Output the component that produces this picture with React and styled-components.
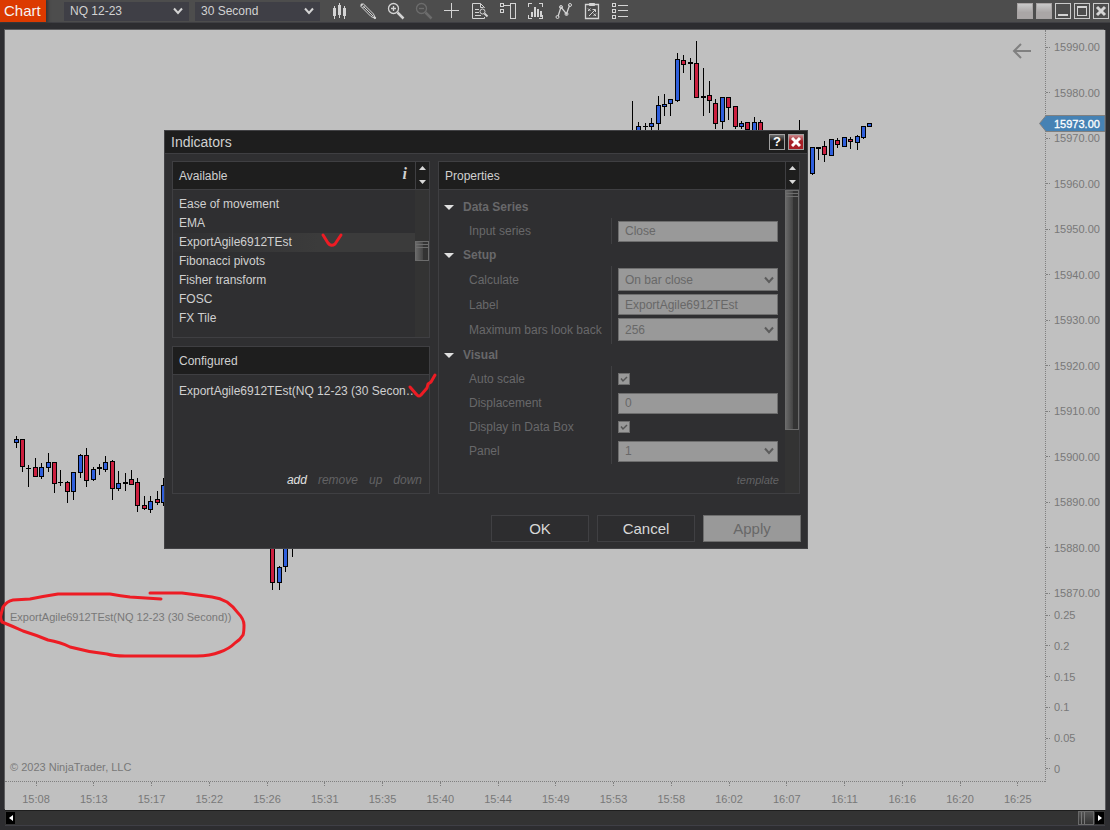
import React from "react";
import styled, { createGlobalStyle, css } from "styled-components";

const Global = createGlobalStyle`
  * { box-sizing: border-box; }
  body {
    margin: 0;
    background: #2d2d30;
    font-family: "Liberation Sans", Arial, sans-serif;
    font-size: 12px;
    color: #d0d0d0;
  }
  button, input, select { font: inherit; color: inherit; margin: 0; }
`;

/* ---------- window ---------- */

const Window = styled.div`
  position: relative;
  display: flex;
  flex-direction: column;
  min-height: 100vh;
`;

const Toolbar = styled.header`
  display: flex;
  align-items: center;
  height: 23px;
  padding-right: 1px;
  background: #4d4d4d;
  border-bottom: 1px solid #3f3f43;
`;

const WindowTab = styled.h1`
  margin: 0 18px 0 0;
  width: 46px;
  height: 22px;
  padding-left: 4px;
  line-height: 21px;
  font-size: 15px;
  font-weight: normal;
  color: #f4f4f4;
  background: #dc3a00;
  box-shadow: 1px 0 3px 1px #333;
`;

const SelectBox = styled.div`
  display: flex;
  align-items: center;
  position: relative;
  flex: none;
  width: ${(p) => (p.$field ? "160px" : "125px")};
  height: ${(p) => p.$height}px;
  margin-right: ${(p) => (p.$field ? 0 : 6)}px;
  svg {
    position: absolute;
    right: ${(p) => (p.$field ? 4 : 6)}px;
    pointer-events: none;
  }
`;

const fieldLook = css`
  background: #999999;
  border: 1px solid #6e6e6e;
  color: #686868;
  opacity: 1;
`;

const SelectControl = styled.select`
  appearance: none;
  width: 100%;
  height: 100%;
  padding: 0 22px 0 6px;
  border: 0;
  border-radius: 0;
  outline: 0;
  background: #3f3f46;
  color: #d2d2d2;
  ${(p) => p.$field && fieldLook}
`;

const ToolGroup = styled.nav`
  display: flex;
  flex: 1;
`;

const ToolButton = styled.button`
  display: flex;
  align-items: center;
  justify-content: center;
  width: 28px;
  height: 20px;
  padding: 0;
  border: 0;
  background: none;
  color: ${(p) => (p.disabled ? "#6c6c6c" : "#d4d4d4")};
`;

const WindowButtons = styled.div`
  display: flex;
  gap: 3px;
`;

const WindowButton = styled.button`
  display: flex;
  align-items: center;
  justify-content: center;
  width: 16px;
  height: 16px;
  padding: 0;
  border: 1px solid ${(p) => (p.$filled ? "#a8a4a4" : "#cacaca")};
  background: ${(p) => (p.$filled ? "linear-gradient(#c9c9c9, #aaa6a6 60%)" : "none")};
  color: #d4d4d4;
`;

/* ---------- chart ---------- */

const Body = styled.main`
  flex: 1;
  display: flex;
  flex-direction: column;
  padding: 7px 5px 4px;
`;

const ChartArea = styled.section`
  flex: 1;
  display: grid;
  grid-template-columns: 1fr 60px;
  grid-template-rows: 1fr 28px;
  background: #c0c0c0;
  color: #787878;
  font-size: 11px;
  line-height: 14px;
  box-shadow: -1px -1px 0 #5c5c5e, 1px 0 0 #5c5c5e;
`;

const Plot = styled.div`
  position: relative;
  display: flex;
  flex-direction: column;
  min-height: 752px;
  border-bottom: 1px dotted #808080;
`;

const Candles = styled.svg`
  position: absolute;
  inset: 0;
  width: 100%;
  height: 100%;
`;

const PricePanel = styled.div`
  flex: 580;
  display: flex;
  justify-content: flex-end;
  align-items: flex-start;
  padding: 12px 13px;
`;

const IndicatorPanel = styled.div`
  flex: 171;
  display: flex;
  flex-direction: column;
  justify-content: space-between;
  padding: 0 5px 7px;
`;

const BackButton = styled.button`
  display: flex;
  padding: 0;
  border: 0;
  background: none;
  position: relative;
`;

const PlotText = styled.p`
  margin: 0;
`;

const PriceAxis = styled.div`
  position: relative;
  display: flex;
  flex-direction: column;
  gap: 8px;
  padding: 10px 0 6px;
  border-left: 1px dotted #808080;
`;

const AxisGroup = styled.ul`
  flex: ${(p) => p.$share} 0 0;
  display: flex;
  flex-direction: column;
  justify-content: space-between;
  margin: 0;
  padding: 0;
  list-style: none;
`;

const AxisRow = styled.li`
  display: flex;
  align-items: center;
  gap: 4px;
  &::before {
    content: "";
    width: 4px;
    border-top: 1px dotted #808080;
  }
`;

const PriceMarker = styled.div`
  position: absolute;
  top: 85px;
  left: -7px;
  right: 0;
  height: 17px;
  padding-left: 15px;
  line-height: 18px;
  color: #fff;
  -webkit-text-stroke: 0.3px #fff;
  svg { position: absolute; inset: 0; width: 100%; height: 100%; }
  span { position: relative; }
`;

const TimeAxis = styled.ul`
  display: flex;
  justify-content: space-between;
  margin: 0;
  padding: 0 12px 0 16px;
  list-style: none;
`;

const TimeMark = styled.li`
  display: flex;
  flex-direction: column;
  align-items: center;
  gap: 6px;
  width: 30px;
  &::before {
    content: "";
    height: 4px;
    border-left: 1px dotted #808080;
  }
`;

const ChartScroll = styled.div`
  display: flex;
  align-items: center;
  gap: 1px;
  height: 16px;
  padding: 0 1px;
  background: #333;
  border-top: 1px solid #1e1e1e;
  border-bottom: 1px solid #3f3f46;
`;

const ScrollArrow = styled.button`
  display: flex;
  align-items: center;
  justify-content: center;
  width: 9px;
  height: 12px;
  padding: 0;
  border: 0;
  background: #000;
`;

const ChartThumb = styled.div`
  width: 16px;
  height: 14px;
  margin-left: auto;
  border: 1px solid #6a6a6a;
  background: linear-gradient(90deg, transparent 2px, #777 2px 3px, transparent 3px 5px, #777 5px 6px, transparent 6px),
    linear-gradient(#555, #333);
`;

/* ---------- dialog ---------- */

const Dialog = styled.section`
  position: absolute;
  top: 130px;
  left: 164px;
  width: 644px;
  background: #2f2f31;
  border: 1px solid #424245;
`;

const TitleBar = styled.div`
  display: flex;
  align-items: center;
  gap: 3px;
  height: 23px;
  padding: 0 3px 0 6px;
  background: #1e1e1e;
  border-bottom: 1px solid #3f3f42;
`;

const DialogTitle = styled.h2`
  flex: 1;
  margin: 0;
  font-size: 14px;
  font-weight: normal;
`;

const TitleButton = styled.button`
  display: flex;
  align-items: center;
  justify-content: center;
  width: 16px;
  height: 16px;
  padding: 0;
  border: 1px solid #a0a0a0;
  font-size: 13px;
  line-height: 14px;
  font-weight: bold;
  color: #fff;
  background: ${(p) =>
    p.$danger ? "linear-gradient(#c98a8e, #a81f26 45%)" : "linear-gradient(#6c6c6c, #1e1e1e 45%)"};
`;

const DialogBody = styled.div`
  display: flex;
  gap: 8px;
  padding: 7px 7px 0;
`;

const Column = styled.div`
  display: flex;
  flex-direction: column;
  gap: 8px;
  width: 258px;
`;

const Panel = styled.div`
  display: flex;
  flex-direction: column;
  min-width: 0;
  height: ${(p) => p.$height}px;
  flex: ${(p) => (p.$grow ? 1 : "none")};
  border: 1px solid #3f3f42;
`;

const PanelHeader = styled.div`
  display: flex;
  align-items: center;
  flex: none;
  height: 28px;
  padding-left: 6px;
  background: #1e1e1e;
  border-bottom: 1px solid #3f3f42;
`;

const PanelTitle = styled.h3`
  flex: 1;
  margin: 0;
  font-size: 12px;
  font-weight: normal;
`;

const InfoButton = styled.button`
  padding: 0 8px 4px;
  border: 0;
  background: none;
  font: italic bold 16px "Liberation Serif", "Times New Roman", serif;
`;

const Spinner = styled.div`
  display: flex;
  flex-direction: column;
  justify-content: space-between;
  width: 14px;
  height: 27px;
  padding: 4px 0 5px;
  border-left: 1px solid #3f3f42;
  button {
    display: flex;
    justify-content: center;
    padding: 0;
    border: 0;
    background: none;
  }
`;

const PanelBody = styled.div`
  flex: 1;
  display: flex;
  min-height: 0;
`;

const ItemList = styled.ul`
  flex: 1;
  min-width: 0;
  margin: 0;
  padding: ${(p) => (p.$roomy ? 7 : 5)}px 0;
  list-style: none;
`;

const Item = styled.li`
  height: 19px;
  line-height: 19px;
  padding: 0 10px 0 6px;
  overflow: hidden;
  white-space: nowrap;
  text-overflow: ellipsis;
  background: ${(p) => (p.$selected ? "linear-gradient(90deg, #303032, #3b3b3b 60%)" : "none")};
`;

const ScrollTrack = styled.div`
  flex: none;
  width: 14px;
  padding-top: ${(p) => p.$offset}px;
  background: #333;
`;

const ScrollThumb = styled.div`
  height: ${(p) => p.$length}px;
  border: 1px solid #6c6c6c;
  background: linear-gradient(transparent 2px, #6f6f6f 2px 3px, transparent 3px 5px, #6f6f6f 5px 6px, transparent 6px),
    linear-gradient(90deg, #686868, #444 7px, #333 7px);
`;

const Actions = styled.div`
  display: flex;
  justify-content: flex-end;
  gap: 11px;
  padding: 0 7px 6px;
`;

const LinkButton = styled.button`
  padding: 0;
  border: 0;
  background: none;
  font-style: italic;
  font-size: ${(p) => (p.$small ? 11 : 12)}px;
  line-height: 14px;
  color: ${(p) => (p.disabled ? "#626264" : "#e0e0e0")};
`;

const Properties = styled.div`
  flex: 1;
  display: flex;
  flex-direction: column;
  padding-top: 6px;
`;

const GroupTitle = styled.h4`
  display: flex;
  align-items: center;
  gap: 9px;
  height: 22px;
  margin: 0;
  padding-left: 5px;
  font-size: 12px;
  color: #68686a;
`;

const GroupBody = styled.div`
  padding: 1px 0 ${(p) => (p.$tall ? 2 : 1)}px;
  background: linear-gradient(#404042, #404042) 172px 0 / 1px 100% no-repeat;
`;

const PropertyRow = styled.div`
  display: grid;
  grid-template-columns: 149px 160px;
  align-items: center;
  height: ${(p) => (p.$tall ? 25 : 24)}px;
  padding-left: 30px;
`;

const PropertyLabel = styled.label`
  color: #68686a;
`;

const TextField = styled.input`
  ${fieldLook}
  width: 160px;
  height: 21px;
  padding: 0 6px;
`;

const CheckField = styled.span`
  display: flex;
  position: relative;
  width: 12px;
  height: 12px;
  input {
    appearance: none;
    width: 12px;
    height: 12px;
    ${fieldLook}
  }
  svg { position: absolute; inset: 0; pointer-events: none; }
`;

const TemplateRow = styled.div`
  display: flex;
  justify-content: flex-end;
  margin-top: auto;
  padding: 0 6px 6px 0;
`;

const Footer = styled.div`
  display: flex;
  justify-content: flex-end;
  gap: 8px;
  padding: 21px 6px 6px;
`;

const DialogButton = styled.button`
  width: 98px;
  height: 27px;
  padding: 0;
  font-size: 15px;
  color: #d8d8d8;
  background: #2d2d2f;
  border: 1px solid #404043;
  ${(p) => p.disabled && fieldLook}
`;

const Markup = styled.svg`
  position: absolute;
  top: 0;
  left: 0;
  pointer-events: none;
`;

/* ---------- data ---------- */

const UP = "#2f5fdc";
const DOWN = "#cc1f3f";
const FLAT = "#000";

// left edge, body top, body bottom, wick top, wick bottom, colour
const CANDLES = [
  [14, 439, 443, 436, 448, UP], [20, 439, 467, 439, 472, DOWN], [26, 468, 469, 465, 487, FLAT],
  [33, 467, 477, 458, 477, DOWN], [39, 467, 477, 463, 479, UP], [46, 462, 468, 453, 472, UP],
  [52, 462, 484, 462, 493, DOWN], [58, 482, 483, 470, 486, FLAT], [65, 482, 492, 481, 503, DOWN],
  [71, 472, 492, 472, 500, UP], [78, 455, 473, 454, 478, UP], [84, 455, 481, 448, 487, DOWN],
  [91, 469, 480, 467, 481, UP], [97, 467, 469, 464, 475, FLAT], [103, 462, 470, 456, 472, UP],
  [110, 461, 489, 460, 500, DOWN], [116, 483, 489, 471, 491, UP], [123, 482, 484, 473, 491, FLAT],
  [129, 479, 485, 470, 485, DOWN], [135, 482, 506, 478, 512, DOWN], [142, 505, 509, 496, 510, DOWN],
  [148, 501, 510, 496, 513, UP], [155, 499, 503, 491, 505, DOWN], [161, 485, 503, 478, 506, UP],
  [270, 520, 583, 510, 590, DOWN], [277, 567, 583, 566, 590, UP], [283, 530, 567, 520, 572, UP],
  [290, 530, 540, 520, 557, UP], [630, 132, 150, 101, 160, UP], [636, 126, 140, 122, 145, UP],
  [643, 126, 127, 123, 134, FLAT], [649, 123, 127, 118, 134, UP], [656, 105, 124, 96, 134, UP],
  [662, 104, 107, 94, 116, UP], [668, 99, 104, 99, 116, UP], [675, 59, 101, 53, 102, UP],
  [681, 60, 65, 55, 73, DOWN], [688, 62, 64, 58, 80, FLAT], [694, 63, 98, 41, 98, DOWN],
  [701, 96, 98, 68, 116, FLAT], [707, 95, 101, 81, 113, DOWN], [713, 103, 124, 99, 129, DOWN],
  [720, 97, 122, 97, 129, UP], [726, 97, 108, 97, 120, DOWN], [733, 106, 127, 106, 129, DOWN],
  [739, 123, 127, 121, 129, UP], [745, 122, 130, 122, 130, DOWN], [752, 122, 134, 117, 134, UP],
  [758, 122, 136, 120, 136, DOWN], [797, 135, 150, 120, 160, UP], [810, 147, 174, 147, 175, UP],
  [816, 147, 149, 147, 160, FLAT], [822, 146, 155, 141, 162, DOWN], [829, 139, 156, 139, 156, UP],
  [835, 140, 145, 138, 148, DOWN], [842, 137, 147, 137, 147, UP], [848, 139, 142, 137, 149, DOWN],
  [855, 136, 143, 135, 150, UP], [861, 126, 138, 126, 139, UP], [867, 123, 127, 123, 127, UP],
];

const PRICES = Array.from({ length: 13 }, (_, i) => (15990 - i * 10).toFixed(2));
const LEVELS = ["0.25", "0.2", "0.15", "0.1", "0.05", "0"];
const TIMES = [
  "15:08", "15:13", "15:17", "15:22", "15:26", "15:31", "15:35", "15:40", "15:44",
  "15:49", "15:53", "15:58", "16:02", "16:07", "16:11", "16:16", "16:20", "16:25",
];
const AVAILABLE = [
  "Ease of movement", "EMA", "ExportAgile6912TEst", "Fibonacci pivots",
  "Fisher transform", "FOSC", "FX Tile",
];

const GROUPS = [
  { title: "Data Series", rows: [{ label: "Input series", type: "text", value: "Close" }] },
  {
    title: "Setup",
    tall: true,
    rows: [
      { label: "Calculate", type: "select", value: "On bar close" },
      { label: "Label", type: "text", value: "ExportAgile6912TEst" },
      { label: "Maximum bars look back", type: "select", value: "256" },
    ],
  },
  {
    title: "Visual",
    rows: [
      { label: "Auto scale", type: "check" },
      { label: "Displacement", type: "text", value: "0" },
      { label: "Display in Data Box", type: "check" },
      { label: "Panel", type: "select", value: "1" },
    ],
  },
];

/* ---------- icons ---------- */

const Icon = ({ children, crisp }) => (
  <svg width="18" height="18" viewBox="0 0 18 18" fill="none" stroke="currentColor"
    shapeRendering={crisp ? "crispEdges" : "auto"}>
    {children}
  </svg>
);

const TOOLS = [
  ["Chart style", <Icon crisp><path fill="currentColor" stroke="none" d="M2 6h3v8h-3zM3 4h1v13h-1zM7 3h3v10h-3zM8 1h1v15h-1zM12 6h3v8h-3zM13 4h1v13h-1z" /></Icon>],
  ["Drawing tools", <Icon><path d="M1.500 4 4 1.500 14.500 12 16.500 16.500 12 14.500zM3.500 6 6 3.500M4.500 4.500 14 14" /><path d="M2 3.500 3.500 2" strokeWidth="2" /><path d="M14.500 14.500 16.500 16.500" strokeWidth="2" /></Icon>],
  ["Zoom in", <Icon><circle cx="6.500" cy="6.500" r="5" strokeWidth="1.300" /><path d="M4 6.500h5M6.500 4v5" strokeWidth="1.300" /><path d="m10.500 10.500 6 6" strokeWidth="2.500" /></Icon>],
  ["Zoom out", <Icon><circle cx="6.500" cy="6.500" r="5" strokeWidth="1.300" /><path d="M4 6.500h5" strokeWidth="1.300" /><path d="m10.500 10.500 6 6" strokeWidth="2.500" /></Icon>, true],
  ["Crosshair", <Icon crisp><path d="M1 8.500h15M8.500 1v15" /></Icon>],
  ["Data box", <Icon><path d="M13.500 6V5.500L9.500 1.500h-8v15h12V15M9.500 1.500v4h3M4 7.500h4M4 10.500h4M4 13.500h6" /><circle cx="11.500" cy="9.500" r="2.500" /><path d="m13.500 11.500 3 3" strokeWidth="2" /></Icon>],
  ["Chart trader", <Icon crisp><path d="M1.500 1.500h3v3h-3zM1.500 7.500h3v3h-3zM5 3.500h6M11.500 1.500h5v15h-5z" /></Icon>],
  ["Data series", <Icon crisp><path d="M1.500 5V1.500H5M12 1.500h3.500V5M15.500 13v3.500H12M5 16.500H1.500V13" /><path strokeWidth="2" d="M5 10v5M8 5v10M11 7v8M14 9v6" /></Icon>],
  ["Indicators", <Icon><path d="M3 14.500 6 5l5.500 7L14.500 3.500" strokeWidth="1.300" /><circle cx="2.500" cy="15" r="1.500" /><circle cx="6" cy="5" r="1.500" /><circle cx="11.500" cy="12" r="1.500" /><circle cx="15" cy="3" r="1.500" /></Icon>],
  ["Strategies", <Icon><path d="M2.500 2.500h13v14h-13z" strokeWidth="1.300" /><path d="M6.500 1.500h5v2h-5z" fill="currentColor" /><path d="m5 6.500 2.500 2.500M7.500 6.500 5 9M10.500 11.500l2.500 2.500M13 11.500 10.500 14M6 14l6-6M9.500 7.500H12.500V10" /></Icon>],
  ["Properties", <Icon crisp><path d="M1.500 1.500h3v3h-3zM1.500 7.500h3v3h-3zM1.500 13.500h3v3h-3zM7 3.500h10M7 8.500h10M7 14.500h10" /></Icon>],
];

const Chevron = ({ color }) => (
  <svg width="10" height="8" viewBox="0 0 10 8" fill="none" stroke={color} strokeWidth="2">
    <path d="M1 1.500 5 6 9 1.500" />
  </svg>
);

const Triangle = ({ up }) => (
  <svg width="7" height="4" viewBox="0 0 7 4" fill="#d8d8d8">
    <path d={up ? "M0 4 3.500 0 7 4z" : "M0 0h7L3.500 4z"} />
  </svg>
);

/* ---------- parts ---------- */

function Select({ label, value, field, height, id }) {
  return (
    <SelectBox $field={field} $height={height}>
      <SelectControl id={id} aria-label={label} $field={field} disabled={field} defaultValue={value}>
        <option>{value}</option>
      </SelectControl>
      <Chevron color={field ? "#5c5c5c" : "#d4d4d4"} />
    </SelectBox>
  );
}

function Property({ row, tall }) {
  const id = row.label.toLowerCase().replace(/ /g, "-");
  return (
    <PropertyRow $tall={tall}>
      <PropertyLabel htmlFor={id}>{row.label}</PropertyLabel>
      {row.type === "text" && <TextField id={id} defaultValue={row.value} disabled />}
      {row.type === "select" && <Select id={id} value={row.value} field height={tall ? 23 : 21} />}
      {row.type === "check" && (
        <CheckField>
          <input id={id} type="checkbox" defaultChecked disabled />
          <svg width="12" height="12" viewBox="0 0 12 12" fill="none" stroke="#555" strokeWidth="1.500">
            <path d="m3 5.500 2 2.500 4-4" />
          </svg>
        </CheckField>
      )}
    </PropertyRow>
  );
}

const HeaderSpinner = () => (
  <Spinner>
    <button aria-label="Scroll up"><Triangle up /></button>
    <button aria-label="Scroll down"><Triangle /></button>
  </Spinner>
);

function IndicatorsDialog() {
  return (
    <Dialog role="dialog" aria-label="Indicators">
      <TitleBar>
        <DialogTitle>Indicators</DialogTitle>
        <TitleButton>?</TitleButton>
        <TitleButton $danger aria-label="Close">
          <svg width="10" height="10" viewBox="0 0 10 10" stroke="#fff" strokeWidth="3">
            <path d="m1 1 8 8M9 1 1 9" />
          </svg>
        </TitleButton>
      </TitleBar>
      <DialogBody>
        <Column>
          <Panel $height={177}>
            <PanelHeader>
              <PanelTitle>Available</PanelTitle>
              <InfoButton aria-label="Information">i</InfoButton>
              <HeaderSpinner />
            </PanelHeader>
            <PanelBody>
              <ItemList>
                {AVAILABLE.map((name) => (
                  <Item key={name} $selected={name === "ExportAgile6912TEst"}>{name}</Item>
                ))}
              </ItemList>
              <ScrollTrack $offset={51}><ScrollThumb $length={20} /></ScrollTrack>
            </PanelBody>
          </Panel>
          <Panel $height={148}>
            <PanelHeader><PanelTitle>Configured</PanelTitle></PanelHeader>
            <PanelBody>
              <ItemList $roomy>
                <Item>ExportAgile6912TEst(NQ 12-23 (30 Second))</Item>
              </ItemList>
            </PanelBody>
            <Actions>
              <LinkButton>add</LinkButton>
              <LinkButton disabled>remove</LinkButton>
              <LinkButton disabled>up</LinkButton>
              <LinkButton disabled>down</LinkButton>
            </Actions>
          </Panel>
        </Column>
        <Panel $grow $height={333}>
          <PanelHeader>
            <PanelTitle>Properties</PanelTitle>
            <HeaderSpinner />
          </PanelHeader>
          <PanelBody>
            <Properties>
              {GROUPS.map((group) => (
                <React.Fragment key={group.title}>
                  <GroupTitle>
                    <svg width="10" height="5" viewBox="0 0 10 5" fill="#e0e0e0"><path d="M0 0h10L5 5z" /></svg>
                    {group.title}
                  </GroupTitle>
                  <GroupBody $tall={group.tall}>
                    {group.rows.map((row) => <Property key={row.label} row={row} tall={group.tall} />)}
                  </GroupBody>
                </React.Fragment>
              ))}
              <TemplateRow><LinkButton $small disabled>template</LinkButton></TemplateRow>
            </Properties>
            <ScrollTrack $offset={0}><ScrollThumb $length={240} /></ScrollTrack>
          </PanelBody>
        </Panel>
      </DialogBody>
      <Footer>
        <DialogButton>OK</DialogButton>
        <DialogButton>Cancel</DialogButton>
        <DialogButton disabled>Apply</DialogButton>
      </Footer>
    </Dialog>
  );
}

export default function App() {
  return (
    <Window>
      <Global />
      <Toolbar>
        <WindowTab>Chart</WindowTab>
        <Select label="Instrument" value="NQ 12-23" height={19} />
        <Select label="Interval" value="30 Second" height={19} />
        <ToolGroup>
          {TOOLS.map(([name, icon, disabled]) => (
            <ToolButton key={name} aria-label={name} disabled={disabled}>{icon}</ToolButton>
          ))}
        </ToolGroup>
        <WindowButtons>
          <WindowButton $filled aria-label="Instrument link" />
          <WindowButton $filled aria-label="Interval link" />
          <WindowButton aria-label="Minimize">
            <svg width="14" height="14"><path d="M2 10h10v2h-10z" fill="currentColor" /></svg>
          </WindowButton>
          <WindowButton aria-label="Maximize">
            <svg width="14" height="14" shapeRendering="crispEdges">
              <path d="M2.500 3.500h9v8h-9zM2 2.500h10" fill="none" stroke="currentColor" />
            </svg>
          </WindowButton>
          <WindowButton aria-label="Close window">
            <svg width="14" height="14"><path d="m3 3 8 8M11 3l-8 8" stroke="currentColor" strokeWidth="3" /></svg>
          </WindowButton>
        </WindowButtons>
      </Toolbar>

      <Body>
        <ChartArea>
          <Plot>
            <Candles shapeRendering="crispEdges">
              <g transform="translate(-5 -30)">
                {CANDLES.map(([x, top, bottom, high, low, color]) => (
                  <g key={x}>
                    <rect x={x + 2} y={high} width="1" height={low - high} />
                    <rect x={x} y={top} width="5" height={bottom - top} />
                    {color !== FLAT && (
                      <rect x={x + 1} y={top + 1} width="3" height={bottom - top - 2} fill={color} />
                    )}
                  </g>
                ))}
              </g>
            </Candles>
            <PricePanel>
              <BackButton aria-label="Return to latest bar">
                <svg width="20" height="18" viewBox="0 0 20 18" fill="none" stroke="#808080" strokeWidth="2">
                  <path d="M19 9H3M9 2 2 9l7 7" />
                </svg>
              </BackButton>
            </PricePanel>
            <IndicatorPanel>
              <PlotText>ExportAgile6912TEst(NQ 12-23 (30 Second))</PlotText>
              <PlotText>© 2023 NinjaTrader, LLC</PlotText>
            </IndicatorPanel>
          </Plot>
          <PriceAxis>
            <AxisGroup $share={560}>{PRICES.map((p) => <AxisRow key={p}>{p}</AxisRow>)}</AxisGroup>
            <AxisGroup $share={168}>{LEVELS.map((l) => <AxisRow key={l}>{l}</AxisRow>)}</AxisGroup>
            <PriceMarker>
              <svg viewBox="0 0 66 17" preserveAspectRatio="none">
                <path d="M0.500 8.500 7 0.500H66V16.500H7z" fill="#4682b4" stroke="#808080" />
              </svg>
              <span>15973.00</span>
            </PriceMarker>
          </PriceAxis>
          <TimeAxis>{TIMES.map((t) => <TimeMark key={t}>{t}</TimeMark>)}</TimeAxis>
        </ChartArea>
        <ChartScroll>
          <ScrollArrow aria-label="Scroll left">
            <svg width="4" height="6"><path d="M4 0v6L0 3z" fill="#fff" /></svg>
          </ScrollArrow>
          <ChartThumb />
          <ScrollArrow aria-label="Scroll right">
            <svg width="4" height="6"><path d="M0 0v6l4-3z" fill="#fff" /></svg>
          </ScrollArrow>
        </ChartScroll>
      </Body>

      <IndicatorsDialog />

      <Markup width="460" height="670" fill="none" stroke="#ed1c24" strokeWidth="3" strokeLinecap="round" strokeLinejoin="round">
        <path d="M150 593H182Q198 595 212 597 220 598 227 602 234 607 238 613 244 619 244 625 244 632 243 635 240 640 235 643 229 649 220 652 210 656 197 656H125Q114 656 107 654 88 652 70 647 60 642 48 640 36 635 23 631 12 626 2 622 0 618 1 615 2 610 3 607 7 601 13 600L30 599Q45 596 58 594H110Q121 596 130 597L161 599" />
        <path d="M323 235 328 243Q331 247 335 244L341 235" />
        <path d="M410 387 417 395Q419 397 421 395L427 388 428 384 431 382 435 375" />
      </Markup>
    </Window>
  );
}
